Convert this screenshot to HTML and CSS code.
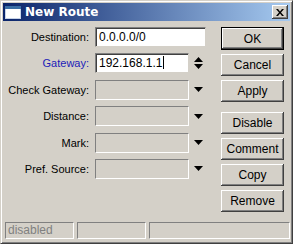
FILE: index.html
```html
<!DOCTYPE html>
<html lang="en">
<head>
    <meta charset="UTF-8">
    <title>New Route</title>
    <link rel="stylesheet" href="styles.css">
</head>
<body>

<div class="window">
    <div class="title-bar">
        <svg class="title-icon" width="16" height="13" viewBox="0 0 16 13">
            <rect x="0.5" y="0.5" width="15" height="12" fill="#fff" stroke="#c8d4e8"/>
            <rect x="0" y="0" width="16" height="3" fill="#3a6ea5"/>
        </svg>
        <span class="title-text">New Route</span>
        <button class="close-btn" type="button">
            <svg width="8" height="7" viewBox="0 0 8 7">
                <path d="M0 0h2l2 2.5 2-2.5h2l-3 3.5 3 3.5h-2l-2-2.5-2 2.5h-2l3-3.5z" fill="#000"/>
            </svg>
        </button>
    </div>

    <div class="content">
        <div class="fields">
            <div class="row">
                <label>Destination:</label>
                <div class="field active wide">0.0.0.0/0</div>
            </div>
            <div class="row">
                <label class="blue">Gateway:</label>
                <div class="field active">192.168.1.1<span class="caret"></span></div>
                <span class="spin">
                    <svg width="9" height="12" viewBox="0 0 9 12">
                        <path d="M4.5 0 9 5H0z M0 7h9l-4.5 5z" fill="#000"/>
                    </svg>
                </span>
            </div>
            <div class="row">
                <label>Check Gateway:</label>
                <div class="field"></div>
                <span class="drop"><svg width="9" height="5" viewBox="0 0 9 5"><path d="M0 0h9L4.5 5z" fill="#000"/></svg></span>
            </div>
            <div class="row">
                <label>Distance:</label>
                <div class="field"></div>
                <span class="drop"><svg width="9" height="5" viewBox="0 0 9 5"><path d="M0 0h9L4.5 5z" fill="#000"/></svg></span>
            </div>
            <div class="row">
                <label>Mark:</label>
                <div class="field"></div>
                <span class="drop"><svg width="9" height="5" viewBox="0 0 9 5"><path d="M0 0h9L4.5 5z" fill="#000"/></svg></span>
            </div>
            <div class="row">
                <label>Pref. Source:</label>
                <div class="field"></div>
                <span class="drop"><svg width="9" height="5" viewBox="0 0 9 5"><path d="M0 0h9L4.5 5z" fill="#000"/></svg></span>
            </div>
        </div>

        <div class="buttons">
            <button class="btn default" type="button">OK</button>
            <button class="btn" type="button">Cancel</button>
            <button class="btn" type="button">Apply</button>
            <button class="btn spaced" type="button">Disable</button>
            <button class="btn" type="button">Comment</button>
            <button class="btn" type="button">Copy</button>
            <button class="btn" type="button">Remove</button>
        </div>
    </div>

    <div class="status-bar">
        <div class="panel small">disabled</div>
        <div class="panel small"></div>
        <div class="panel grow"></div>
    </div>
</div>

</body>
</html>
```

FILE: styles.css
```css
body {
    margin: 0;
    padding: 0;
    background: #d4d0c8;
    font-family: "Liberation Sans", Arial, sans-serif;
    font-size: 11px;
    color: #000;
}

.window {
    width: 293px;
    height: 244px;
    box-sizing: border-box;
    background: #d4d0c8;
    border-top: 1px solid #d4d0c8;
    border-left: 1px solid #d4d0c8;
    border-right: 1px solid #404040;
    border-bottom: 1px solid #404040;
    box-shadow: inset 1px 1px 0 #fff, inset -1px -1px 0 #808080;
    padding: 2px;
    display: flex;
    flex-direction: column;
}

.title-bar {
    height: 18px;
    background: linear-gradient(to right, #0a246a, #a6caf0);
    display: flex;
    align-items: center;
    padding: 0 2px;
}

.title-icon {
    margin-right: 4px;
}

.title-text {
    color: #fff;
    font-weight: bold;
    font-size: 12px;
    font-family: "DejaVu Sans", sans-serif;
    flex: 1;
}

.close-btn {
    width: 16px;
    height: 14px;
    padding: 0;
    background: #d4d0c8;
    border: none;
    box-shadow: inset -1px -1px 0 #404040, inset 1px 1px 0 #fff, inset -2px -2px 0 #808080;
    display: flex;
    align-items: center;
    justify-content: center;
}

.content {
    display: flex;
    padding: 6px 0 0 0;
    flex: 1;
}

.fields {
    display: flex;
    flex-direction: column;
    gap: 6.4px;
    width: 216px;
}

.row {
    display: flex;
    align-items: center;
    height: 20px;
}

.row label {
    width: 86px;
    text-align: right;
    margin-right: 6px;
    white-space: nowrap;
}

.row label.blue {
    color: #1c1cb8;
}

.field {
    width: 94px;
    height: 20px;
    box-sizing: border-box;
    border-top: 1px solid #808080;
    border-left: 1px solid #808080;
    border-right: 1px solid #fff;
    border-bottom: 1px solid #fff;
    padding: 2px 3px;
    line-height: 15px;
    font-size: 12px;
}

.field.active {
    background: #fff;
    box-shadow: inset 1px 1px 0 #404040;
    border-right-color: #d4d0c8;
    border-bottom-color: #d4d0c8;
}

.field.wide {
    width: 111px;
}

.caret {
    display: inline-block;
    width: 1px;
    height: 13px;
    background: #000;
    vertical-align: -2px;
    margin-left: 1px;
}

.spin,
.drop {
    width: 17px;
    display: flex;
    justify-content: center;
    margin-left: 1px;
}

.buttons {
    display: flex;
    flex-direction: column;
    gap: 4px;
    padding-left: 2px;
}

.btn {
    width: 63px;
    height: 22px;
    padding: 0;
    font-family: "Liberation Sans", Arial, sans-serif;
    font-size: 12px;
    color: #000;
    background: #d4d0c8;
    border: none;
    box-shadow: inset -1px -1px 0 #404040, inset 1px 1px 0 #fff, inset -2px -2px 0 #808080;
}

.btn.default {
    height: 23px;
    border: 1px solid #000;
}

.btn.spaced {
    margin-top: 6px;
}

.status-bar {
    display: flex;
    gap: 3px;
    padding: 0 0 2px 2px;
    height: 17px;
}

.panel {
    box-sizing: border-box;
    height: 17px;
    border-top: 1px solid #808080;
    border-left: 1px solid #808080;
    border-right: 1px solid #fff;
    border-bottom: 1px solid #fff;
    padding: 0 2px;
    color: #808080;
    font-size: 12px;
    line-height: 15px;
}

.panel.small {
    width: 69px;
}

.panel.grow {
    flex: 1;
}
```
